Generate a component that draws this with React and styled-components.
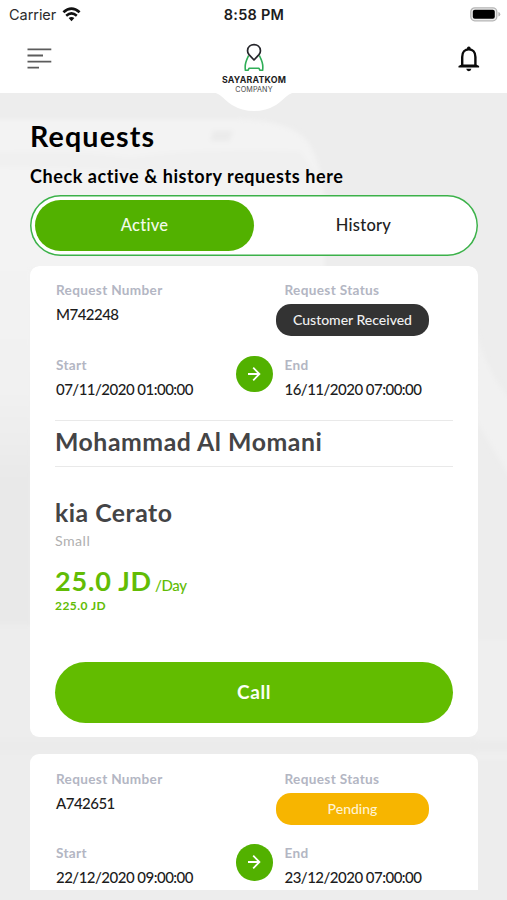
import React from 'react';
import styled, { createGlobalStyle } from 'styled-components';

const GlobalStyle = createGlobalStyle`
  *, *::before, *::after { box-sizing: border-box; }
  html, body { margin: 0; padding: 0; background: #ededed; }
  button { font: inherit; border: 0; padding: 0; margin: 0; cursor: pointer; background: none; }
`;

const Screen = styled.div`
  position: relative;
  display: flex;
  flex-direction: column;
  width: 507px;
  height: 900px;
  overflow: hidden;
  background: #ededed;
  color: #000;
  font-family: Lato, 'Open Sans', sans-serif;
`;

const Backdrop = styled.svg`
  position: absolute;
  left: 0;
  top: 92px;
`;

const Header = styled.header`
  position: relative;
  display: flex;
  flex-direction: column;
  height: 92.5px;
  background: #fff;
`;

const StatusBar = styled.div`
  display: grid;
  grid-template-columns: 1fr auto 1fr;
  align-items: center;
  height: 28px;
  padding: 0 8px 0 9px;
  font-family: Inter, sans-serif;
`;

const Carrier = styled.div`
  display: flex;
  align-items: center;
  gap: 6px;
  font-size: 14.5px;
  letter-spacing: -0.05px;
  color: #2b2b2b;
`;

const Clock = styled.div`
  font-size: 14.5px;
  font-weight: 600;
  letter-spacing: 0.25px;
  color: #1c1c1c;
`;

const BatteryIcon = styled.svg`
  justify-self: end;
  margin-right: -2px;
`;

const NavBar = styled.div`
  display: flex;
  justify-content: space-between;
  padding: 17px 26.5px 0 27px;
`;

const IconButton = styled.button`
  display: flex;
  height: 28px;
`;

const LogoBulge = styled.div`
  position: absolute;
  left: 207px;
  top: 42px;
  width: 94px;
  display: flex;
  flex-direction: column;
  align-items: center;
`;

const BulgeShape = styled.svg`
  position: absolute;
  left: 0;
  top: 50px;
`;

const LogoMark = styled.svg`
  position: relative;
`;

const LogoName = styled.div`
  position: relative;
  margin-top: 2px;
  font-family: Inter, sans-serif;
  font-size: 8.8px;
  line-height: 10px;
  font-weight: 700;
  letter-spacing: 0.2px;
  color: #1d1d1d;
`;

const LogoSub = styled.div`
  position: relative;
  font-family: Inter, sans-serif;
  font-size: 7.2px;
  line-height: 10px;
  letter-spacing: 0.1px;
  color: #4a4a4a;
`;

const Main = styled.main`
  position: relative;
  display: flex;
  flex-direction: column;
  width: 448px;
  margin: 26px 0 0 30px;
`;

const Title = styled.h1`
  margin: 0;
  font-size: 28.6px;
  line-height: 34px;
  font-weight: 700;
  letter-spacing: 1.15px;
`;

const Subtitle = styled.p`
  margin: 11px 0 0;
  font-size: 18px;
  line-height: 24px;
  font-weight: 700;
  letter-spacing: 0.58px;
  white-space: nowrap;
`;

const Tabs = styled.div`
  display: grid;
  grid-template-columns: 219px 1fr;
  height: 61.5px;
  margin-top: 7px;
  padding: 5px;
  border-radius: 31px;
  background: #fff;
  box-shadow: inset 0 0 0 1.5px #3cb14a;
`;

const Tab = styled.button`
  height: 51.5px;
  border-radius: 26px;
  font-size: 16.5px;
  font-weight: 500;
  letter-spacing: 0.25px;
  color: ${(p) => (p.$active ? '#f2fbe9' : '#222')};
  background: ${(p) => (p.$active ? '#52b100' : 'transparent')};
`;

const List = styled.section`
  display: flex;
  flex-direction: column;
  gap: 17.5px;
  height: 624.5px;
  margin-top: 9.5px;
  overflow: hidden;
  border-radius: 9px 9px 0 0;
`;

const Card = styled.article`
  flex: none;
  height: 471px;
  padding: 15.5px 25px 0;
  border-radius: 9px;
  background: #fff;
`;

const InfoRow = styled.div`
  display: grid;
  grid-template-columns: 180px 48.5px 1fr;
  padding-left: 1px;
  margin-top: ${(p) => (p.$spaced ? '19.5px' : '0')};
`;

const Field = styled.div`
  display: flex;
  flex-direction: column;
  align-items: flex-start;
`;

const Label = styled.div`
  font-size: 13.6px;
  line-height: 18px;
  font-weight: 700;
  letter-spacing: 0.33px;
  color: #b3b6c3;
`;

const Value = styled.div`
  margin-top: 5px;
  font-size: 15px;
  line-height: 20px;
  font-weight: 500;
  letter-spacing: -0.52px;
  white-space: nowrap;
  color: #1c1c1c;
`;

const Badge = styled.div`
  display: flex;
  align-items: center;
  justify-content: center;
  width: 153px;
  height: 32px;
  margin: 5px 0 0 -8.5px;
  padding-bottom: 1px;
  border-radius: 15px;
  font-size: 14px;
  font-weight: 500;
  color: ${(p) => (p.$tone === 'pending' ? '#fff3d2' : '#f0f0f0')};
  background: ${(p) => (p.$tone === 'pending' ? '#f7b500' : '#333')};
`;

const ArrowCircle = styled.div`
  display: flex;
  align-items: center;
  justify-content: center;
  width: 36.5px;
  height: 36.5px;
  border-radius: 50%;
  background: #52b100;
`;

const Customer = styled.h2`
  display: flex;
  align-items: center;
  height: 47px;
  margin: 21px 0 0;
  padding-bottom: 3px;
  border: solid #e9e9e9;
  border-width: 1px 0;
  font-size: 24.8px;
  font-weight: 700;
  letter-spacing: 0.54px;
  color: #444446;
`;

const CarName = styled.h3`
  margin: 31px 0 0;
  font-size: 24.8px;
  line-height: 30px;
  font-weight: 700;
  letter-spacing: 0.5px;
  color: #444446;
`;

const CarClass = styled.div`
  margin-top: 4px;
  font-size: 14.2px;
  line-height: 18px;
  letter-spacing: 0.45px;
  color: #b0b0b0;
`;

const PriceRow = styled.div`
  display: flex;
  align-items: baseline;
  gap: 3px;
  height: 32px;
  margin-top: 15.5px;
  line-height: 32px;
  color: #62bc05;
`;

const Price = styled.span`
  font-size: 27px;
  font-weight: 700;
  letter-spacing: 0.8px;
`;

const PriceUnit = styled.span`
  font-size: 15px;
  font-weight: 500;
  letter-spacing: -0.35px;
`;

const Total = styled.div`
  margin-top: 1.5px;
  font-size: 12px;
  line-height: 14px;
  font-weight: 700;
  letter-spacing: 0.45px;
  color: #62bc05;
`;

const CallButton = styled.button`
  display: block;
  width: 398px;
  height: 61px;
  margin-top: 49px;
  padding-bottom: 1px;
  border-radius: 31px;
  font-size: 19px;
  font-weight: 700;
  letter-spacing: 0.6px;
  color: #fbfff5;
  background: #62bc00;
`;

const requests = [
  {
    id: 'M742248',
    status: 'Customer Received',
    tone: 'received',
    start: '07/11/2020 01:00:00',
    end: '16/11/2020 07:00:00',
    customer: 'Mohammad Al Momani',
    car: 'kia Cerato',
    carClass: 'Small',
    price: '25.0 JD',
    total: '225.0 JD',
  },
  {
    id: 'A742651',
    status: 'Pending',
    tone: 'pending',
    start: '22/12/2020 09:00:00',
    end: '23/12/2020 07:00:00',
  },
];

function RequestCard({ request }) {
  return (
    <Card>
      <InfoRow>
        <Field>
          <Label>Request Number</Label>
          <Value>{request.id}</Value>
        </Field>
        <span />
        <Field>
          <Label>Request Status</Label>
          <Badge $tone={request.tone}>{request.status}</Badge>
        </Field>
      </InfoRow>
      <InfoRow $spaced>
        <Field>
          <Label>Start</Label>
          <Value>{request.start}</Value>
        </Field>
        <ArrowCircle>
          <svg width="14" height="16" viewBox="0 0 14 16" fill="none" stroke="#fff" strokeWidth="1.8">
            <path d="M1 8H12.4M6.2 1.6 12.4 8 6.2 14.4" />
          </svg>
        </ArrowCircle>
        <Field>
          <Label>End</Label>
          <Value>{request.end}</Value>
        </Field>
      </InfoRow>
      {request.customer && (
        <>
          <Customer>{request.customer}</Customer>
          <CarName>{request.car}</CarName>
          <CarClass>{request.carClass}</CarClass>
          <PriceRow>
            <Price>{request.price}</Price>
            <PriceUnit>/Day</PriceUnit>
          </PriceRow>
          <Total>{request.total}</Total>
          <CallButton>Call</CallButton>
        </>
      )}
    </Card>
  );
}

export default function App() {
  return (
    <>
      <GlobalStyle />
      <Screen>
        <Backdrop width="507" height="808" viewBox="0 92 507 808">
          <defs>
            <linearGradient id="side" x1="0" y1="0" x2="0" y2="1">
              <stop offset="0" stopColor="#f3f3f3" />
              <stop offset="0.6" stopColor="#f1f1f1" />
              <stop offset="1" stopColor="#e9e9e9" />
            </linearGradient>
            <filter id="soft"><feGaussianBlur stdDeviation="2" /></filter>
          </defs>
          <rect y="92" width="507" height="808" fill="#ededed" />
          <g filter="url(#soft)">
            <path d="M-5 119H240Q292 121 308 142Q320 160 325 200V270H-5Z" fill="#f3f3f3" />
            <path d="M-5 153Q80 150 130 158Q200 148 300 152L318 178Q160 170 -5 166Z" fill="#f0f0f0" />
            <path d="M213 131H233L229 141H211Z" fill="#ebebeb" />
            <path d="M-5 262H32V480H-5Z" fill="url(#side)" />
            <path d="M-5 480H32V625H-5Z" fill="#e9e9e9" />
            <path d="M475 330Q490 380 512 400V480L476 420Z" fill="#f1f1f1" />
            <path d="M475 640H512V760H475Z" fill="#efefef" />
            <path d="M-5 740H512V752H-5Z" fill="#ebebeb" />
          </g>
        </Backdrop>
        <Header>
          <StatusBar>
            <Carrier>
              Carrier
              <svg width="19" height="15" viewBox="0 0 19 15">
                <path d="M1.4 5.3Q9.5-2 17.6 5.3" fill="none" stroke="#111" strokeWidth="2.7" />
                <path d="M4.2 8.7Q9.5 4 14.8 8.7" fill="none" stroke="#111" strokeWidth="2.5" />
                <path d="M6.6 11.1Q9.5 8.7 12.4 11.1L9.5 14.2Z" fill="#111" />
              </svg>
            </Carrier>
            <Clock>8:58 PM</Clock>
            <BatteryIcon width="31" height="15" viewBox="0 0 31 15">
              <rect x="0.8" y="0.8" width="26" height="13" rx="4" fill="#eee" stroke="#b5b5b5" strokeWidth="1.3" />
              <rect x="2.8" y="2.8" width="22" height="9" rx="2" fill="#000" />
              <path d="M28.4 5Q30.3 5.6 30.3 7.3T28.4 9.6Z" fill="#b5b5b5" />
            </BatteryIcon>
          </StatusBar>
          <NavBar>
            <IconButton aria-label="Menu">
              <svg width="25" height="28" viewBox="0 0 25 28" stroke="#5c5c5c" strokeWidth="1.8">
                <path d="M0.5 4.3H24.3M0.5 10.5H16M0.5 16.6H24.3M0.5 22.7H12" />
              </svg>
            </IconButton>
            <IconButton aria-label="Notifications">
              <svg width="24" height="28" viewBox="0 0 24 28">
                <path d="M5.2 20.5V12C5.2 7.2 8 4.4 11.8 4.4S18.4 7.2 18.4 12V20.5" fill="none" stroke="#0b0b0b" strokeWidth="2.4" />
                <path d="M9.8 4.4Q9.8 1.5 11.8 1.5T13.8 4.4Z" fill="#0b0b0b" />
                <path d="M1.5 22.4V21L4.5 19.4H19.1L22.1 21V22.4Z" fill="#0b0b0b" />
                <path d="M9.2 23.8H14.4Q14 26.2 11.8 26.2T9.2 23.8Z" fill="#0b0b0b" />
              </svg>
            </IconButton>
          </NavBar>
          <LogoBulge>
            <BulgeShape width="94" height="20" viewBox="0 0 94 20">
              <path d="M3 0C13 0 16 7 25 13Q35 19 47 19T69 13C78 7 81 0 91 0Z" fill="#fff" />
            </BulgeShape>
            <LogoMark width="22" height="31" viewBox="0 0 22 31" fill="none" strokeLinejoin="round">
              <path d="M5.6 13.5 3.8 17.6 2.8 20.5Q1.8 24 2.4 28.3H5L6 26.3H16L17 28.3H19.6Q20.2 24 19.2 20.5L18.2 17.6 16.4 13.5" stroke="#2fae57" strokeWidth="1.6" />
              <path d="M11 18 6 12.6Q4.4 10.6 4.6 8.4C4.8 4.8 7.7 2.7 11 2.7S17.2 4.8 17.4 8.4Q17.6 10.6 16 12.6Z" stroke="#25252b" strokeWidth="1.7" />
            </LogoMark>
            <LogoName>SAYARATKOM</LogoName>
            <LogoSub>COMPANY</LogoSub>
          </LogoBulge>
        </Header>
        <Main>
          <Title>Requests</Title>
          <Subtitle>Check active &amp; history requests here</Subtitle>
          <Tabs>
            <Tab $active>Active</Tab>
            <Tab>History</Tab>
          </Tabs>
          <List>
            {requests.map((r) => (
              <RequestCard key={r.id} request={r} />
            ))}
          </List>
        </Main>
      </Screen>
    </>
  );
}
